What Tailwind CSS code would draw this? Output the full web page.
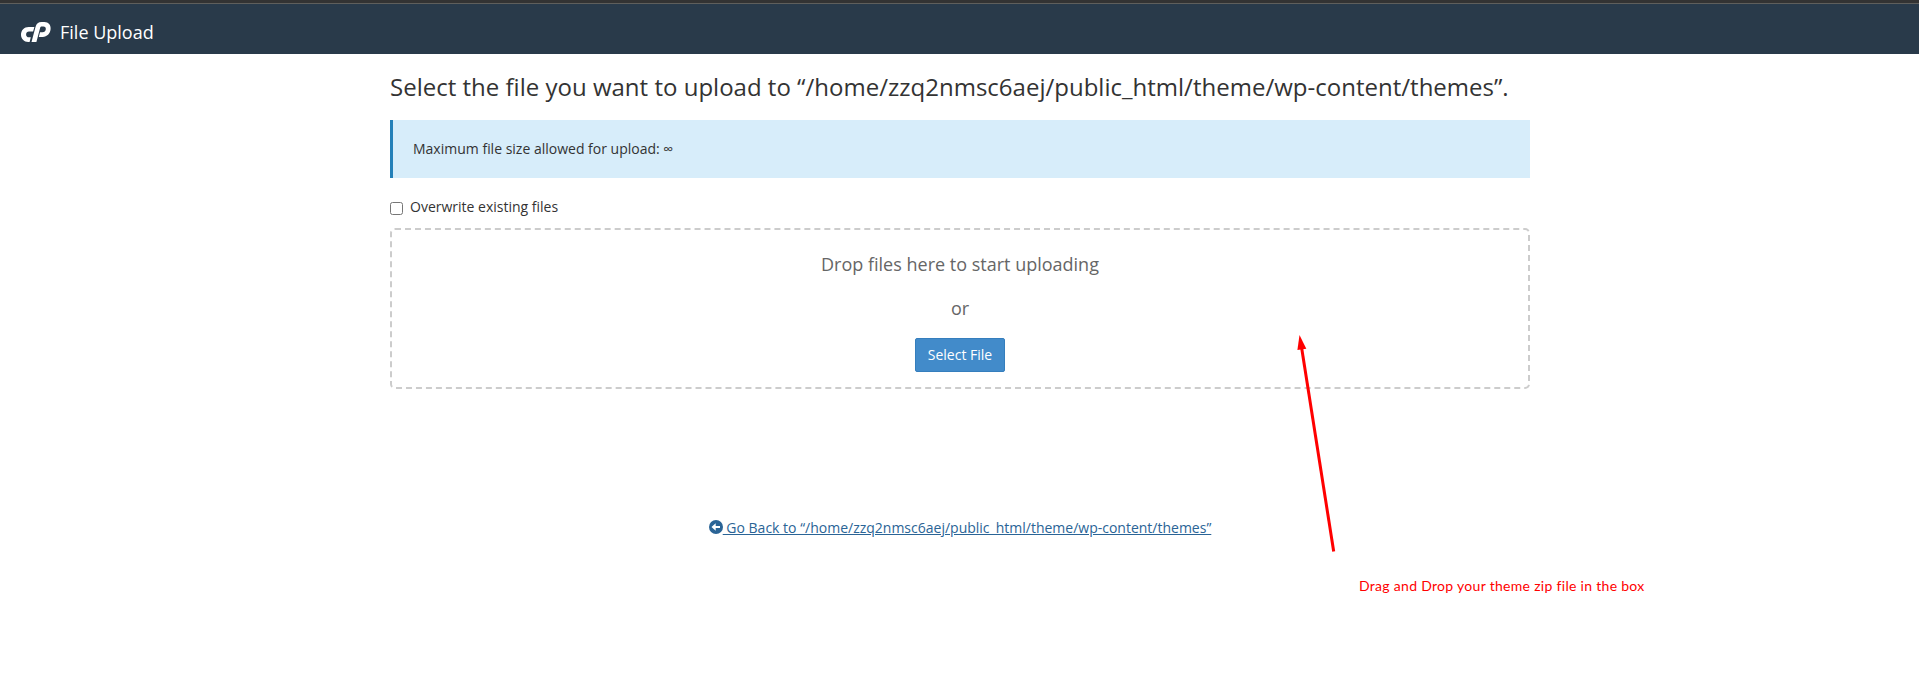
<!DOCTYPE html>
<html lang="en">
<head>
<meta charset="utf-8">
<title>File Upload</title>
<script src="https://cdn.jsdelivr.net/npm/@tailwindcss/browser@4"></script>
</head>
<body class="relative h-[700px] overflow-hidden bg-white font-['Open_Sans',sans-serif] text-[13px] text-[#333333]">
<header class="flex h-[54px] items-center border-t-[3px] border-[#333333] bg-[#293a4a] pl-[21px] shadow-[inset_0_1px_0_#5f5f5c]">
<svg class="mt-[7px] h-5 w-[30px]" viewBox="0 0 30 20" fill="#fff"><path d="M7.6 5H13.4L12.1 9.6H8C6.3 9.6 5.1 10.8 5.1 12.4C5.1 14.1 6.2 15.3 7.9 15.3H9.8L8.6 20H7.3C3 20 0 16.8 0 12.8C0 8.2 3.2 5 7.6 5Z"/><path d="M10.5 20L14.5 4.9C15.4 1.6 17.3 0 20.6 0H23.4C27.5 0 30 3 29.6 7C29.2 11.6 26 14.9 21.7 14.9H17.8L19 10.3H21.5C23.4 10.3 24.6 9.1 24.8 7.3C25 5.7 24 4.6 22.5 4.6H20.9C19.9 4.6 19.4 5 19.1 6L15.4 20Z"/></svg>
<h1 class="mt-[7px] ml-[9px] text-[18px] leading-6 text-white">File Upload</h1>
</header>
<main class="ml-[390px] flex w-[1140px] flex-col">
<h2 class="mt-[20px] text-[24px] leading-[26px] tracking-[0.008px] whitespace-nowrap">Select the file you want to upload to “/home/zzq2nmsc6aej/public_html/theme/wp-content/themes”.</h2>
<div class="mt-[20px] flex h-[58px] items-center border-l-[3px] border-[#2480b8] bg-[#d7edfa] pb-px pl-5 text-[14px] leading-5">Maximum file size allowed for upload: ∞</div>
<label class="mt-[19px] flex h-[20px] text-[14px] leading-5"><input type="checkbox" class="mt-[5px] mr-[7px] h-[13px] w-[13px]">Overwrite existing files</label>
<section class="mt-[11px] flex h-[161px] flex-col items-center rounded-[5px] border-2 border-dashed border-[#cccccc] text-[18px] leading-[26px] text-[#666666]">
<p class="mt-[21px]">Drop files here to start uploading</p>
<p class="mt-[18px]">or</p>
<button class="mt-[17px] h-[34px] w-[90px] rounded-[2px] border border-[#357ebd] bg-[#428bca] text-[14px] leading-5 text-white">Select File</button>
</section>
<a class="mt-[129px] flex justify-center text-[14px] leading-5 text-[#2a6496]"><svg class="mt-[2px] h-[14px] w-[14px]" viewBox="0 0 14 14"><circle cx="7" cy="7" r="7" fill="#2a6496"/><path d="M2.5 7L6.7 3.3V5.9H11V8.1H6.7V10.7Z" fill="#fff"/></svg><span class="whitespace-pre underline"> Go Back to “/home/zzq2nmsc6aej/public_html/theme/wp-content/themes”</span></a>
</main>
<!-- Annotation over the page -->
<svg class="absolute top-[330px] left-[1290px] h-[230px] w-[60px]" viewBox="0 0 60 230"><path d="M11.5 17L43.7 221.5" stroke="#f00" stroke-width="3"/><path d="M9.5 5L16.3 18.7L7.4 20Z" fill="#f00"/></svg>
<p class="absolute top-[576px] left-[1359px] font-['Lato',sans-serif] text-[14px] leading-5 tracking-[0.3px] whitespace-nowrap text-[#ff0000]">Drag and Drop your theme zip file in the box</p>
</body>
</html>
